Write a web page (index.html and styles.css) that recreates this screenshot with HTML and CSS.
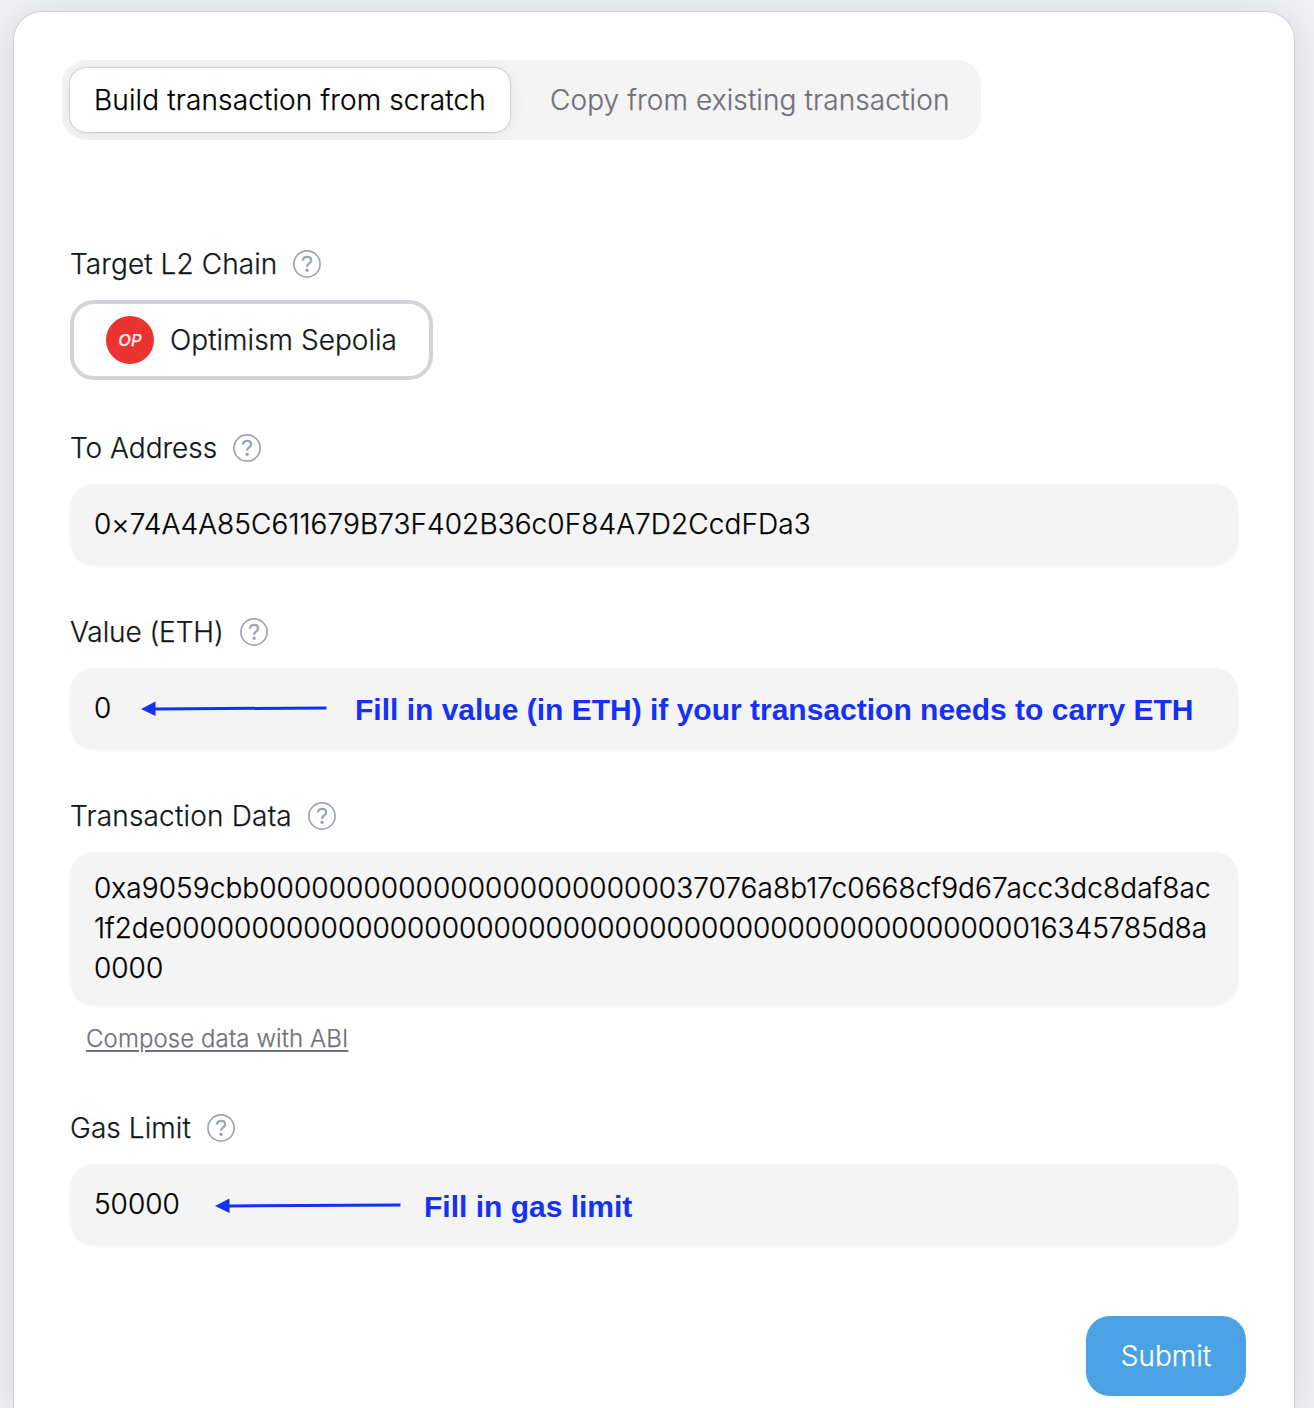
FILE: index.html
```html
<!DOCTYPE html>
<html lang="en">
<head>
<meta charset="utf-8">
<title>Build transaction</title>
<link rel="stylesheet" href="styles.css">
</head>
<body>
<svg class="defs" width="0" height="0" aria-hidden="true">
  <symbol id="help" viewBox="0 0 28 28">
    <circle cx="14" cy="14" r="13.1" fill="none" stroke="currentColor" stroke-width="1.7"/>
    <path d="M9.9 10.6C10.1 8.1 11.8 6.9 14.1 6.9C16.5 6.9 18.100 8.3 18.100 10.2C18.100 11.9 17.200 12.700 16 13.400C14.700 14.200 14.100 14.900 14.100 16.700" fill="none" stroke="currentColor" stroke-width="2.3"/>
    <circle cx="14.1" cy="20.2" r="1.7" fill="currentColor"/>
  </symbol>
  <symbol id="arrow" viewBox="0 0 186 16">
    <path d="M14 8.9L185.500 8" fill="none" stroke="currentColor" stroke-width="3"/>
    <path d="M0 9L14.500 1.500V16Z" fill="currentColor"/>
  </symbol>
</svg>
<main class="card">
  <nav class="tabs">
    <button class="tab tab-active"><span>Build transaction from scratch</span></button>
    <button class="tab"><span>Copy from existing transaction</span></button>
  </nav>
  <form class="form">
    <section class="group">
      <div class="label"><span>Target L2 Chain</span><svg class="help"><use href="#help"/></svg></div>
      <div class="chain"><span class="logo">OP</span><span>Optimism Sepolia</span></div>
    </section>
    <section class="group">
      <div class="label label-address"><span>To Address</span><svg class="help"><use href="#help"/></svg></div>
      <div class="field"><span class="address">0×74A4A85C611679B73F402B36c0F84A7D2CcdFDa3</span></div>
    </section>
    <section class="group">
      <div class="label label-value"><span>Value (ETH)</span><svg class="help"><use href="#help"/></svg></div>
      <div class="field"><span class="short-value">0</span><svg class="arrow"><use href="#arrow"/></svg><strong class="note note-value">Fill in value (in ETH) if your transaction needs to carry ETH</strong></div>
    </section>
    <section class="group">
      <div class="label label-data"><span>Transaction Data</span><svg class="help"><use href="#help"/></svg></div>
      <div class="field data"><span><span class="data-first">0xa9059cbb00000000000000000000000037076a8b17c0668cf9d67acc3dc8daf8ac</span><br>1f2de0000000000000000000000000000000000000000000000000016345785d8a<br>0000</span></div>
      <a class="compose">Compose data with ABI</a>
    </section>
    <section class="group">
      <div class="label"><span>Gas Limit</span><svg class="help"><use href="#help"/></svg></div>
      <div class="field"><span class="gas-value">50000</span><svg class="arrow arrow-gas"><use href="#arrow"/></svg><strong class="note note-gas">Fill in gas limit</strong></div>
    </section>
    <button class="submit" type="button"><span>Submit</span></button>
  </form>
</main>
</body>
</html>
```
FILE: styles.css
```css
* { box-sizing: border-box; }
html { height: 100%; overflow: hidden; }
body {
  margin: 0;
  height: 1408px;
  overflow: hidden;
  padding: 11px 19px 0 13px;
  background: #f1f2f6;
  color: #11181c;
  font: 300 28px/40px Inter, "Liberation Sans", sans-serif;
  font-optical-sizing: none;
  -webkit-text-stroke: .25px currentColor;
}
.defs { position: absolute; }
button { font: inherit; border: 0; margin: 0; padding: 0; background: none; }
.card {
  width: 1282px;
  height: 1397px;
  padding: 48px 48px 0;
  border: 1px solid #cfd0d4;
  border-bottom: 0;
  border-radius: 29px 29px 0 0;
  background: #fff;
  box-shadow: 0 4px 40px rgba(0, 0, 20, .12);
}
.tabs {
  display: flex;
  gap: 16px;
  width: 919px;
  height: 80px;
  padding: 8px;
  border-radius: 24px;
  background: #f4f4f4;
  overflow: hidden;
}
.tab {
  width: 447px;
  height: 64px;
  padding: 0 24px;
  border-radius: 16px;
  color: #71717a;
  letter-spacing: .11px;
  text-align: left;
  white-space: nowrap;
}
.tab-active {
  width: 440px;
  color: #000;
  background: #fff;
  letter-spacing: .13px;
  box-shadow: 0 0 1px 1px rgba(0, 0, 0, .14), 0 3px 20px rgba(0, 0, 0, .06);
}
.form {
  display: flex;
  flex-direction: column;
  width: 1168px;
  margin: 104px 0 0 8px;
}
.group { margin-bottom: 48px; }
.label {
  display: flex;
  align-items: center;
  gap: 16px;
  height: 40px;
  margin-bottom: 16px;
  letter-spacing: .08px;
}
.label-address { letter-spacing: 0; }
.label-value { letter-spacing: -.09px; }
.label-data { letter-spacing: .19px; }
.help { width: 28px; height: 28px; color: #a0a5b1; }
.chain {
  display: flex;
  align-items: center;
  gap: 16px;
  width: 363px;
  height: 80px;
  padding-left: 32px;
  border: 4px solid #d4d4d8;
  border-radius: 24px;
  letter-spacing: .03px;
}
.logo {
  width: 48px;
  height: 48px;
  border-radius: 50%;
  background: #eb3431;
  color: #ffe9e9;
  font-size: 16.5px;
  font-weight: 500;
  font-style: italic;
  line-height: 48px;
  text-align: center;
}
.field {
  display: flex;
  align-items: center;
  height: 80px;
  padding: 0 24px;
  border-radius: 24px;
  background: #f4f4f4;
  box-shadow: 0 2px 3px rgba(0, 0, 0, .05);
  color: #000;
  white-space: nowrap;
}
.address { letter-spacing: .08px; }
.data { height: 152px; }
.data-first { letter-spacing: .075px; }
.short-value { width: 47px; }
.gas-value { width: 121px; }
.arrow { width: 186px; height: 16px; color: #1431f5; }
.arrow-gas { margin-top: 2px; }
.note {
  color: #1431f5;
  font: 700 30px/40px "Liberation Sans", Arial, sans-serif;
  padding-top: 3px;
  -webkit-text-stroke: 0;
}
.note-value { margin-left: 28px; }
.note-gas { margin-left: 23px; padding-top: 5px; }
.compose {
  display: block;
  width: max-content;
  margin: 17px 0 3px 16px;
  color: #71717a;
  font-size: 24px;
  line-height: 36px;
  letter-spacing: .09px;
  text-decoration: underline 2px;
  text-underline-offset: 3px;
}
.submit {
  width: 160px;
  height: 80px;
  margin: 24px -8px 0 auto;
  border-radius: 24px;
  background: #4aa2e4;
  color: #fff;
}
```
